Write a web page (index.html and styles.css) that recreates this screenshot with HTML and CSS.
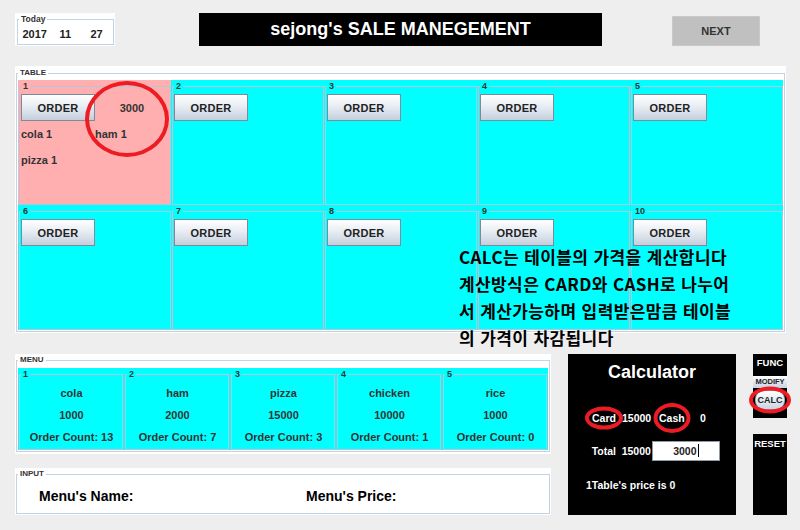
FILE: index.html
```html
<!DOCTYPE html>
<html lang="ko">
<head>
    <meta charset="UTF-8">
    <meta name="viewport" content="width=device-width, initial-scale=1.0">
    <title>sejong's SALE MANEGEMENT</title>
    <link rel="stylesheet" href="styles.css">
</head>
<body>
    <div class="app">
        <div class="top">
            <div class="panel today">
                <fieldset>
                    <legend>Today</legend>
                    <div class="date"><span>2017</span><span>11</span><span>27</span></div>
                </fieldset>
            </div>
            <div class="title">sejong's SALE MANEGEMENT</div>
            <button class="next">NEXT</button>
        </div>

        <div class="panel table-panel">
            <fieldset>
                <legend>TABLE</legend>
                <div class="tables">
                    <div class="cell busy">
                        <fieldset>
                            <legend>1</legend>
                            <div class="cell-body">
                                <button class="order">ORDER</button>
                                <span class="price">3000</span>
                                <span>cola 1</span>
                                <span>ham 1</span>
                                <span>pizza 1</span>
                            </div>
                        </fieldset>
                        <span class="ring ring-table"></span>
                    </div>
                    <div class="cell"><fieldset><legend>2</legend><div class="cell-body"><button class="order">ORDER</button></div></fieldset></div>
                    <div class="cell"><fieldset><legend>3</legend><div class="cell-body"><button class="order">ORDER</button></div></fieldset></div>
                    <div class="cell"><fieldset><legend>4</legend><div class="cell-body"><button class="order">ORDER</button></div></fieldset></div>
                    <div class="cell"><fieldset><legend>5</legend><div class="cell-body"><button class="order">ORDER</button></div></fieldset></div>
                    <div class="cell"><fieldset><legend>6</legend><div class="cell-body"><button class="order">ORDER</button></div></fieldset></div>
                    <div class="cell"><fieldset><legend>7</legend><div class="cell-body"><button class="order">ORDER</button></div></fieldset></div>
                    <div class="cell"><fieldset><legend>8</legend><div class="cell-body"><button class="order">ORDER</button></div></fieldset></div>
                    <div class="cell"><fieldset><legend>9</legend><div class="cell-body"><button class="order">ORDER</button></div></fieldset></div>
                    <div class="cell"><fieldset><legend>10</legend><div class="cell-body"><button class="order">ORDER</button></div></fieldset></div>
                </div>
            </fieldset>
        </div>

        <p class="note">CALC는 테이블의 가격을 계산합니다<br>계산방식은 CARD와 CASH로 나누어<br>서 계산가능하며 입력받은맘큼 테이블<br>의 가격이 차감됩니다</p>

        <div class="bottom">
            <div class="left">
                <div class="panel menu-panel">
                    <fieldset>
                        <legend>MENU</legend>
                        <div class="menus">
                            <div class="menu"><fieldset><legend>1</legend><div class="menu-body"><span>cola</span><span>1000</span><span>Order Count: 13</span></div></fieldset></div>
                            <div class="menu"><fieldset><legend>2</legend><div class="menu-body"><span>ham</span><span>2000</span><span>Order Count: 7</span></div></fieldset></div>
                            <div class="menu"><fieldset><legend>3</legend><div class="menu-body"><span>pizza</span><span>15000</span><span>Order Count: 3</span></div></fieldset></div>
                            <div class="menu"><fieldset><legend>4</legend><div class="menu-body"><span>chicken</span><span>10000</span><span>Order Count: 1</span></div></fieldset></div>
                            <div class="menu"><fieldset><legend>5</legend><div class="menu-body"><span>rice</span><span>1000</span><span>Order Count: 0</span></div></fieldset></div>
                        </div>
                    </fieldset>
                </div>
                <div class="panel input-panel">
                    <fieldset>
                        <legend>INPUT</legend>
                        <div class="inputs"><span>Menu's Name:</span><span>Menu's Price:</span></div>
                    </fieldset>
                </div>
            </div>

            <div class="calc">
                <h2>Calculator</h2>
                <div class="pay">
                    <span class="label">Card<i class="ring ring-card"></i></span>
                    <span>15000</span>
                    <span class="label">Cash<i class="ring ring-cash"></i></span>
                    <span>0</span>
                </div>
                <div class="total">
                    <span>Total</span>
                    <span>15000</span>
                    <div class="amount">3000<b class="caret"></b></div>
                </div>
                <div class="result">1Table's price is 0</div>
            </div>

            <div class="side">
                <div class="func">
                    <div class="func-title">FUNC</div>
                    <button class="modify">MODIFY</button>
                    <button class="calc-btn">CALC<i class="ring ring-calc"></i></button>
                </div>
                <div class="reset">RESET</div>
            </div>
        </div>
    </div>
</body>
</html>
```

FILE: styles.css
```css
*{
    margin: 0;
    padding: 0;
}
body{
    background: #eeeeee;
    font-family: "Liberation Sans", "Noto Sans CJK KR", sans-serif;
    color: #333333;
}
.app{
    position: relative;
    width: 800px;
    height: 530px;
    padding: 13px 0 0 15px;
    box-sizing: border-box;
    overflow: hidden;
}
button{
    font-family: "Liberation Sans", sans-serif;
    font-weight: bold;
    color: #222222;
    cursor: pointer;
}

/* titled border (swing style) */
fieldset{
    border: 1px solid #c3d3e6;
    min-width: 0;
    box-sizing: border-box;
}
legend{
    padding: 0 2px;
    font-size: 8px;
    line-height: 10px;
    font-weight: bold;
    color: #333333;
}
.panel{
    background: #ffffff;
    box-sizing: border-box;
    display: flex;
}
.panel > fieldset{
    flex: 1;
}

/* top */
.top{
    display: flex;
    align-items: flex-start;
    height: 33px;
}
.today{
    width: 100px;
    height: 33px;
    padding: 1px 1px 1px 2px;
}
.today legend{
    margin-left: 1px;
    font-size: 8.5px;
}
.date{
    display: grid;
    grid-template-columns: 37px 31px auto;
    padding-left: 4.5px;
    font-size: 11px;
    line-height: 20px;
    font-weight: bold;
    color: #222222;
}
.title{
    margin-left: 84px;
    width: 403px;
    height: 33px;
    background: #000000;
    color: #ffffff;
    font-size: 18px;
    line-height: 33px;
    font-weight: bold;
    text-align: center;
}
.next{
    margin: 3px 0 0 70px;
    width: 88px;
    height: 30px;
    background: #c0c0c0;
    border: 1px solid #c9c9c9;
    font-size: 11px;
    color: #333333;
}

/* tables */
.table-panel{
    margin-top: 20px;
    width: 771px;
    height: 267px;
    padding: 2px 1px 1px 1px;
}
.table-panel > fieldset{
    padding: 2px 1px 1px 1px;
}
.tables{
    display: grid;
    grid-template-columns: repeat(5, 153px);
    grid-template-rows: repeat(2, 125px);
    background: #00ffff;
}
.cell{
    position: relative;
    display: flex;
    padding: 1px 0 0 1px;
}
.cell.busy{
    background: #ffafaf;
}
.cell fieldset{
    flex: 1;
    padding: 3px 0 0 1px;
    border-color: #b7c4d8;
}
.cell legend{
    font-size: 9px;
}
.cell-body{
    display: grid;
    grid-template-columns: 74px 74px;
    grid-template-rows: 27px 26px 26px;
    align-items: center;
    font-size: 11px;
    font-weight: bold;
}
.order{
    width: 74px;
    height: 27px;
    border: 1px solid #7b8b9c;
    background: linear-gradient(#ffffff, #e8edf3 45%, #c4cfdd);
    font-size: 11px;
    letter-spacing: 0.3px;
}
.price{
    text-align: center;
}

/* red marks drawn over the screen */
.ring{
    position: absolute;
    border: 4px solid #ed1c24;
    border-radius: 50%;
    box-sizing: border-box;
    pointer-events: none;
}
.ring-table{
    left: 67px;
    top: 1px;
    width: 84px;
    height: 76px;
}

.note{
    position: absolute;
    left: 459px;
    top: 243px;
    font-family: "Noto Sans CJK KR", sans-serif;
    font-size: 17px;
    line-height: 27px;
    font-weight: bold;
    letter-spacing: 0.4px;
    color: #000000;
    white-space: nowrap;
}

/* bottom */
.bottom{
    display: flex;
    margin-top: 21px;
}
.left{
    width: 536px;
}
.menu-panel{
    height: 100px;
    padding: 1px 1px 2px 1px;
}
.menu-panel > fieldset{
    padding: 3px 1px 1px 1px;
}
.menus{
    display: grid;
    grid-template-columns: repeat(5, 106px);
    height: 82px;
    background: #00ffff;
}
.menu{
    display: flex;
    padding: 1px 1px 0 1px;
}
.menu fieldset{
    flex: 1;
    padding: 3px 0 0 1px;
    border-color: #b7c4d8;
}
.menu legend{
    font-size: 9px;
}
.menu-body{
    display: grid;
    grid-template-rows: repeat(3, 22px);
    align-items: center;
    text-align: center;
    font-size: 11px;
    font-weight: bold;
}
.input-panel{
    margin-top: 14px;
    height: 47px;
    padding: 1px;
}
.input-panel > fieldset{
    padding: 0 1px;
}
.inputs{
    display: grid;
    grid-template-columns: 267px auto;
    padding: 8px 0 0 21px;
    font-size: 14px;
    line-height: 18px;
    font-weight: bold;
    color: #000000;
}

/* calculator */
.calc{
    margin-left: 17px;
    width: 168px;
    height: 161px;
    background: #000000;
    color: #ffffff;
    font-weight: bold;
}
.calc h2{
    margin-top: 7px;
    font-size: 18px;
    line-height: 22px;
    text-align: center;
}
.pay{
    display: grid;
    grid-template-columns: 30px 37px 41px auto;
    margin-top: 27px;
    padding-left: 24px;
    font-size: 10.5px;
    line-height: 16px;
}
.label{
    position: relative;
    justify-self: start;
}
.ring-card{
    left: 50%;
    top: 50%;
    width: 38px;
    height: 23px;
    transform: translate(-50%, -50%);
}
.ring-cash{
    left: 50%;
    top: 50%;
    width: 37px;
    height: 30px;
    transform: translate(-50%, -50%);
}
.total{
    display: grid;
    grid-template-columns: 30px 30.5px 67.5px;
    align-items: center;
    height: 20px;
    margin-top: 15px;
    padding-left: 23.7px;
    font-size: 10.5px;
}
.amount{
    height: 20px;
    box-sizing: border-box;
    border: 1px solid #8e9bab;
    background: #ffffff;
    color: #222222;
    padding-left: 20px;
    line-height: 18px;
}
.caret{
    display: inline-block;
    width: 1px;
    height: 13px;
    margin-left: 1px;
    background: #000000;
    vertical-align: -2px;
}
.result{
    margin-top: 16px;
    padding-left: 18px;
    font-size: 10.5px;
    line-height: 16px;
}

/* func / reset */
.side{
    margin-left: 17px;
    width: 34px;
}
.func{
    display: flex;
    flex-direction: column;
    height: 64px;
    background: #000000;
}
.func-title{
    color: #ffffff;
    font-size: 9.5px;
    line-height: 18px;
    font-weight: bold;
    text-align: center;
}
.modify{
    margin-top: 4px;
    height: 12px;
    border: none;
    background: linear-gradient(#ffffff, #dfe6ef 50%, #c8d3e1);
    font-size: 7.5px;
    line-height: 12px;
}
.calc-btn{
    position: relative;
    margin: 2px 2px 0 2px;
    height: 20px;
    border: 1px solid #9aa8b8;
    border-radius: 9px;
    background: linear-gradient(#ffffff, #e4eaf2 50%, #c9d4e2);
    font-size: 9px;
}
.ring-calc{
    left: 50%;
    top: 50%;
    width: 42px;
    height: 27px;
    transform: translate(-50%, -50%);
}
.reset{
    margin-top: 16px;
    height: 81px;
    background: #000000;
    color: #ffffff;
    font-size: 9.5px;
    line-height: 20px;
    font-weight: bold;
    text-align: center;
}
```
